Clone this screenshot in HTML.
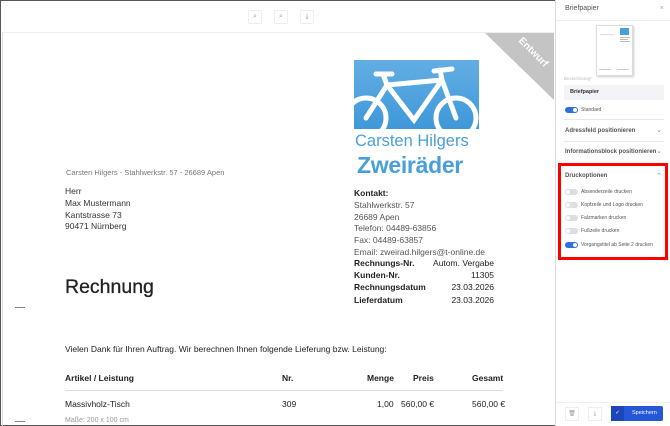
<!DOCTYPE html>
<html><head><meta charset="utf-8"><style>
*{margin:0;padding:0;box-sizing:border-box}
body{width:670px;height:426px;overflow:hidden;font-family:"Liberation Sans",sans-serif;background:#fff;position:relative;color:#222}
.frame{position:absolute;inset:0;border:1px solid #555;border-right:none}
.abs{position:absolute;white-space:nowrap}
.tb{position:absolute;top:10px;width:14px;height:14px;border:1px solid #eee;border-radius:2px;font-size:7px;color:#999;text-align:center;line-height:12px}
.doc{position:absolute;left:2px;top:32px;width:552px;height:394px;border-top:1px solid #eee;border-left:1px solid #ddd;overflow:hidden}
.panel{position:absolute;left:555px;top:0;width:115px;height:426px;border-left:1px solid #ddd;background:#fff}
.sep{position:absolute;left:8px;width:100px;height:1px;background:#e8e8e8}
.ph{position:absolute;left:9px;font-size:6px;font-weight:bold;color:#555}
.chev{position:absolute;right:8px;font-size:7px;color:#888}
.tg{position:absolute;left:9px;width:13px;height:6px;border-radius:3px;background:#dcdfe4}
.tg::after{content:"";position:absolute;left:1px;top:1px;width:4px;height:4px;border-radius:50%;background:#fff}
.tg.on{background:#2f6fde}.tg.on::after{left:8px}
.tl{position:absolute;left:25px;font-size:5px;color:#555}
</style></head><body>
<div class="frame"></div>
<div class="tb" style="left:248px">⌕</div>
<div class="tb" style="left:274px">⌕</div>
<div class="tb" style="left:300px">⤓</div>
<div class="doc">
 <div class="abs" style="left:482px;top:0;width:70px;height:68px;background:#c4c4c4;clip-path:polygon(0 0,100% 0,100% 100%)"></div>
 <div class="abs" style="left:500px;top:14px;width:60px;color:#fff;font-size:10px;font-weight:bold;text-align:center;transform:rotate(45deg)">Entwurf</div>
 <div class="abs" style="left:351px;top:27px;width:125px;height:69px;background:linear-gradient(#62aee3,#3f98d9);overflow:hidden">
  <svg width="125" height="69" viewBox="0 0 125 69" fill="none" stroke="#fff" stroke-width="5" stroke-linecap="round">
   <circle cx="12" cy="58" r="20"/><circle cx="102" cy="58" r="20"/>
   <path d="M12 58 L33 25 L60 60 L88 20 L102 58 M33 25 L88 20 M22 14 L38 14 M80 11 L98 9 M33 25 L29 14 M88 20 L86 10"/>
  </svg>
 </div>
 <div class="abs" style="left:352px;top:99px;font-size:16.5px;color:#4a9fdb">Carsten Hilgers</div>
 <div class="abs" style="left:354px;top:119px;font-size:23px;font-weight:bold;color:#4a9fdb;letter-spacing:-0.3px">Zweiräder</div>
 <div class="abs" style="left:63px;top:135px;font-size:7.5px;color:#777">Carsten Hilgers - Stahlwerkstr. 57 - 26689 Apen</div>
 <div class="abs" style="left:62px;top:153px;font-size:8.5px;line-height:11.8px;color:#333">Herr<br>Max Mustermann<br>Kantstrasse 73<br>90471 Nürnberg</div>
 <div class="abs" style="left:351px;top:155px;font-size:8.5px;line-height:11.8px;color:#555"><b style="color:#222">Kontakt:</b><br>Stahlwerkstr. 57<br>26689 Apen<br>Telefon: 04489-63856<br>Fax: 04489-63857<br>Email: zweirad.hilgers@t-online.de</div>
 <div class="abs" style="left:351px;top:224px;width:140px;font-size:8.5px;line-height:12.2px;color:#222">
  <div style="display:flex;justify-content:space-between"><b>Rechnungs-Nr.</b><span>Autom. Vergabe</span></div>
  <div style="display:flex;justify-content:space-between"><b>Kunden-Nr.</b><span>11305</span></div>
  <div style="display:flex;justify-content:space-between"><b>Rechnungsdatum</b><span>23.03.2026</span></div>
  <div style="display:flex;justify-content:space-between"><b>Lieferdatum</b><span>23.03.2026</span></div>
 </div>
 <div class="abs" style="left:12px;top:274px;width:10px;height:1px;background:#888"></div>
 <div class="abs" style="left:12px;top:388px;width:10px;height:1px;background:#888"></div>
 <div class="abs" style="left:62px;top:243px;font-size:19.5px;color:#222;-webkit-text-stroke:0.3px #222">Rechnung</div>
 <div class="abs" style="left:62px;top:311px;font-size:8.5px">Vielen Dank für Ihren Auftrag. Wir berechnen Ihnen folgende Lieferung bzw. Leistung:</div>
 <div class="abs" style="left:62px;top:340px;font-size:8.5px;font-weight:bold">Artikel / Leistung</div>
 <div class="abs" style="left:279px;top:340px;font-size:8.5px;font-weight:bold">Nr.</div>
 <div class="abs" style="left:364px;top:340px;font-size:8.5px;font-weight:bold">Menge</div>
 <div class="abs" style="left:410px;top:340px;font-size:8.5px;font-weight:bold">Preis</div>
 <div class="abs" style="left:469px;top:340px;font-size:8.5px;font-weight:bold">Gesamt</div>
 <div class="abs" style="left:62px;top:357px;width:438px;height:1px;background:#ddd"></div>
 <div class="abs" style="left:62px;top:366px;font-size:8.5px">Massivholz-Tisch</div>
 <div class="abs" style="left:279px;top:366px;font-size:8.5px">309</div>
 <div class="abs" style="left:374px;top:366px;font-size:8.5px">1,00</div>
 <div class="abs" style="left:398px;top:366px;font-size:8.5px">560,00 €</div>
 <div class="abs" style="left:469px;top:366px;font-size:8.5px">560,00 €</div>
 <div class="abs" style="left:62px;top:384px;font-size:7px;color:#999">Maße: 200 x 100 cm</div>
</div>
<div class="panel">
 <div class="abs" style="left:9px;top:5px;font-size:7px;color:#555">Briefpapier</div>
 <div class="abs" style="right:6px;top:5px;font-size:7px;color:#aaa">×</div>
 <div class="abs" style="left:0;top:20px;width:115px;height:1px;background:#eee"></div>
 <div class="abs" style="left:40px;top:25px;width:37px;height:51px;border:1px solid #ddd;box-shadow:1px 1px 2px #ccc;background:#fff">
  <div class="abs" style="left:23px;top:2px;width:9px;height:7px;background:#4a9fdb"></div>
  <div class="abs" style="left:3px;top:8px;width:14px;height:1px;background:#ddd"></div>
  <div class="abs" style="left:23px;top:11px;width:10px;height:1px;background:#bbb"></div>
  <div class="abs" style="left:23px;top:13px;width:8px;height:1px;background:#bbb"></div>
  <div class="abs" style="left:23px;top:15px;width:10px;height:1px;background:#bbb"></div>
  <div class="abs" style="left:2px;top:43px;width:12px;height:1px;background:#ccc"></div>
  <div class="abs" style="left:20px;top:43px;width:12px;height:1px;background:#ccc"></div>
 </div>
 <div class="abs" style="left:8px;top:76px;font-size:4.5px;color:#bbb">Bezeichnung*</div>
 <div class="abs" style="left:8px;top:85px;width:100px;height:15px;background:#f2f4f7;border-radius:2px;font-size:5.5px;font-weight:bold;color:#333;padding:4px 6px">Briefpapier</div>
 <div class="tg on" style="top:107px"></div><div class="tl" style="top:107px">Standard</div>
 <div class="sep" style="top:119px"></div>
 <div class="ph" style="top:128px">Adressfeld positionieren</div><div class="chev" style="top:126px">⌄</div>
 <div class="sep" style="top:141px"></div>
 <div class="ph" style="top:149px">Informationsblock positionieren</div><div class="chev" style="top:147px">⌄</div>
 <div class="abs" style="left:2px;top:163px;width:110px;height:97px;border:3px solid #f00"></div>
 <div class="ph" style="top:173px">Druckoptionen</div><div class="chev" style="top:172px">⌃</div>
 <div class="tg" style="top:189px"></div><div class="tl" style="top:189px">Absenderzeile drucken</div>
 <div class="tg" style="top:202px"></div><div class="tl" style="top:202px">Kopfzeile und Logo drucken</div>
 <div class="tg" style="top:215px"></div><div class="tl" style="top:215px">Falzmarken drucken</div>
 <div class="tg" style="top:228px"></div><div class="tl" style="top:228px">Fußzeile drucken</div>
 <div class="tg on" style="top:242px"></div><div class="tl" style="top:242px">Vorgangstitel ab Seite 2 drucken</div>
 <div class="abs" style="left:0;top:402px;width:115px;height:1px;background:#eee"></div>
 <div class="abs" style="left:9px;top:407px;width:14px;height:14px;border:1px solid #eee;font-size:6px;color:#999;text-align:center;line-height:12px">🗑</div>
 <div class="abs" style="left:32px;top:407px;width:14px;height:14px;border:1px solid #eee;font-size:6px;color:#999;text-align:center;line-height:12px">⤓</div>
 <div class="abs" style="left:55px;top:406px;width:52px;height:15px;background:#2557d6;border-radius:2px;color:#fff;font-size:5.5px;line-height:15px">
  <span style="display:inline-block;width:13px;background:#1d47b8;text-align:center">✓</span><span style="margin-left:8px">Speichern</span></div>
</div>
</body></html>
